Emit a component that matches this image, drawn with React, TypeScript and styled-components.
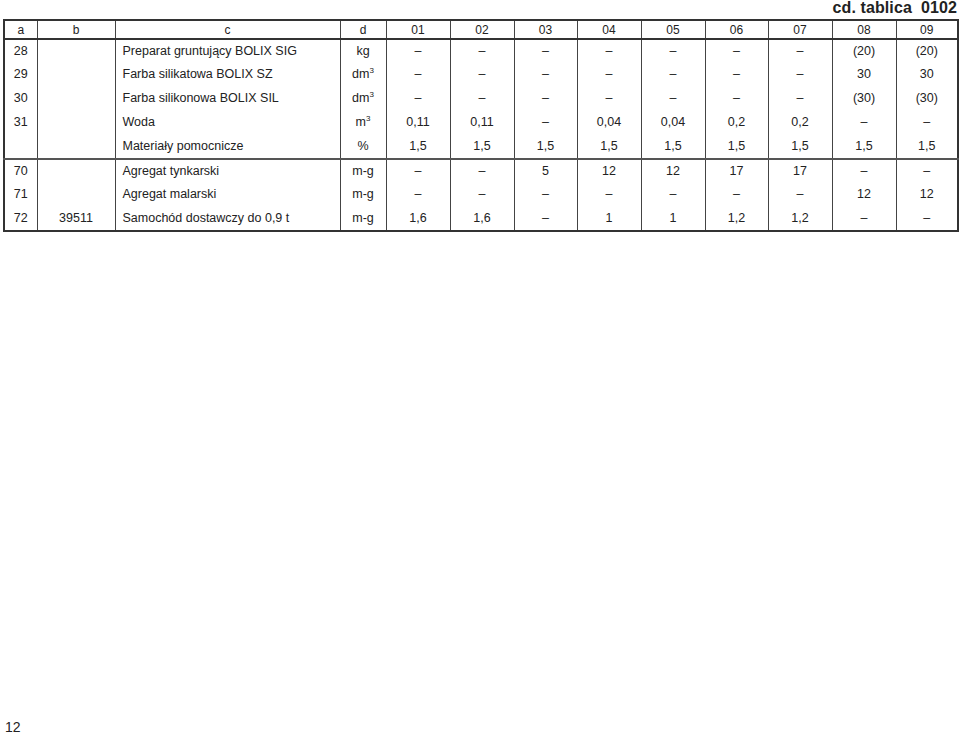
import type { ReactNode } from "react";
import styled, { createGlobalStyle } from "styled-components";

const GlobalStyle = createGlobalStyle`
  html, body {
    margin: 0;
    padding: 0;
    background: #ffffff;
  }
  body {
    font-family: "Liberation Sans", Arial, sans-serif;
    color: #222222;
  }
`;

const Page = styled.div`
  min-height: 734px;
  box-sizing: border-box;
  padding: 0 3px 0 3px;
  display: flex;
  flex-direction: column;
`;

const Title = styled.div`
  text-align: right;
  font-weight: bold;
  font-size: 16px;
  line-height: 16px;
  height: 19px;
  color: #222;
  letter-spacing: 0.1px;
`;

const Table = styled.table`
  width: 954px;
  table-layout: fixed;
  border-collapse: collapse;
  border: 2px solid #333;
  font-size: 12.5px;
`;

const HeadCell = styled.th`
  font-weight: normal;
  font-size: 12px;
  height: 17px;
  padding: 0;
  text-align: center;
  vertical-align: middle;
  border-left: 1px solid #444;
  border-bottom: 2px solid #333;
`;

const BodyRow = styled.tr<{ $groupEnd?: boolean }>`
  height: 24px;
  border-bottom: ${(p) => (p.$groupEnd ? "2px solid #555" : "none")};
`;

const Cell = styled.td`
  padding: 0 0 2px 0;
  text-align: center;
  vertical-align: middle;
  border-left: 1px solid #444;
  white-space: nowrap;
`;

const NameCell = styled(Cell)`
  text-align: left;
  padding-left: 7px;
`;

const Sup = styled.sup`
  font-size: 8px;
  vertical-align: top;
  position: relative;
  top: -1px;
`;

const PageNumber = styled.div`
  margin-top: auto;
  padding: 0 0 0 2px;
  font-size: 14px;
  line-height: 14px;
`;

type Row = {
  lp: string;
  code: string;
  name: string;
  unit: ReactNode;
  values: string[];
  groupEnd?: boolean;
};

const D = "–";

const cube = (base: string) => (
  <>
    {base}
    <Sup>3</Sup>
  </>
);

const headers = ["a", "b", "c", "d", "01", "02", "03", "04", "05", "06", "07", "08", "09"];

const rows: Row[] = [
  { lp: "28", code: "", name: "Preparat gruntujący BOLIX SIG", unit: "kg", values: [D, D, D, D, D, D, D, "(20)", "(20)"] },
  { lp: "29", code: "", name: "Farba silikatowa BOLIX SZ", unit: cube("dm"), values: [D, D, D, D, D, D, D, "30", "30"] },
  { lp: "30", code: "", name: "Farba silikonowa BOLIX SIL", unit: cube("dm"), values: [D, D, D, D, D, D, D, "(30)", "(30)"] },
  { lp: "31", code: "", name: "Woda", unit: cube("m"), values: ["0,11", "0,11", D, "0,04", "0,04", "0,2", "0,2", D, D] },
  { lp: "", code: "", name: "Materiały pomocnicze", unit: "%", values: ["1,5", "1,5", "1,5", "1,5", "1,5", "1,5", "1,5", "1,5", "1,5"], groupEnd: true },
  { lp: "70", code: "", name: "Agregat tynkarski", unit: "m-g", values: [D, D, "5", "12", "12", "17", "17", D, D] },
  { lp: "71", code: "", name: "Agregat malarski", unit: "m-g", values: [D, D, D, D, D, D, D, "12", "12"] },
  { lp: "72", code: "39511", name: "Samochód dostawczy do 0,9 t", unit: "m-g", values: ["1,6", "1,6", D, "1", "1", "1,2", "1,2", D, D] },
];

const colWidths = [33, 78, 225, 46, 64, 64, 63, 64, 64, 63, 64, 64, 62];

const App = () => {
  return (
    <>
      <GlobalStyle />
      <Page>
        <Title>cd. tablica&nbsp;&nbsp;0102</Title>
        <Table>
          <colgroup>
            {colWidths.map((w, i) => (
              <col key={i} style={{ width: w }} />
            ))}
          </colgroup>
          <thead>
            <tr>
              {headers.map((h) => (
                <HeadCell key={h}>{h}</HeadCell>
              ))}
            </tr>
          </thead>
          <tbody>
            {rows.map((r, i) => (
              <BodyRow key={i} $groupEnd={r.groupEnd}>
                <Cell>{r.lp}</Cell>
                <Cell>{r.code}</Cell>
                <NameCell>{r.name}</NameCell>
                <Cell>{r.unit}</Cell>
                {r.values.map((v, j) => (
                  <Cell key={j}>{v}</Cell>
                ))}
              </BodyRow>
            ))}
          </tbody>
        </Table>
        <PageNumber>12</PageNumber>
      </Page>
    </>
  );
};

export default App;
